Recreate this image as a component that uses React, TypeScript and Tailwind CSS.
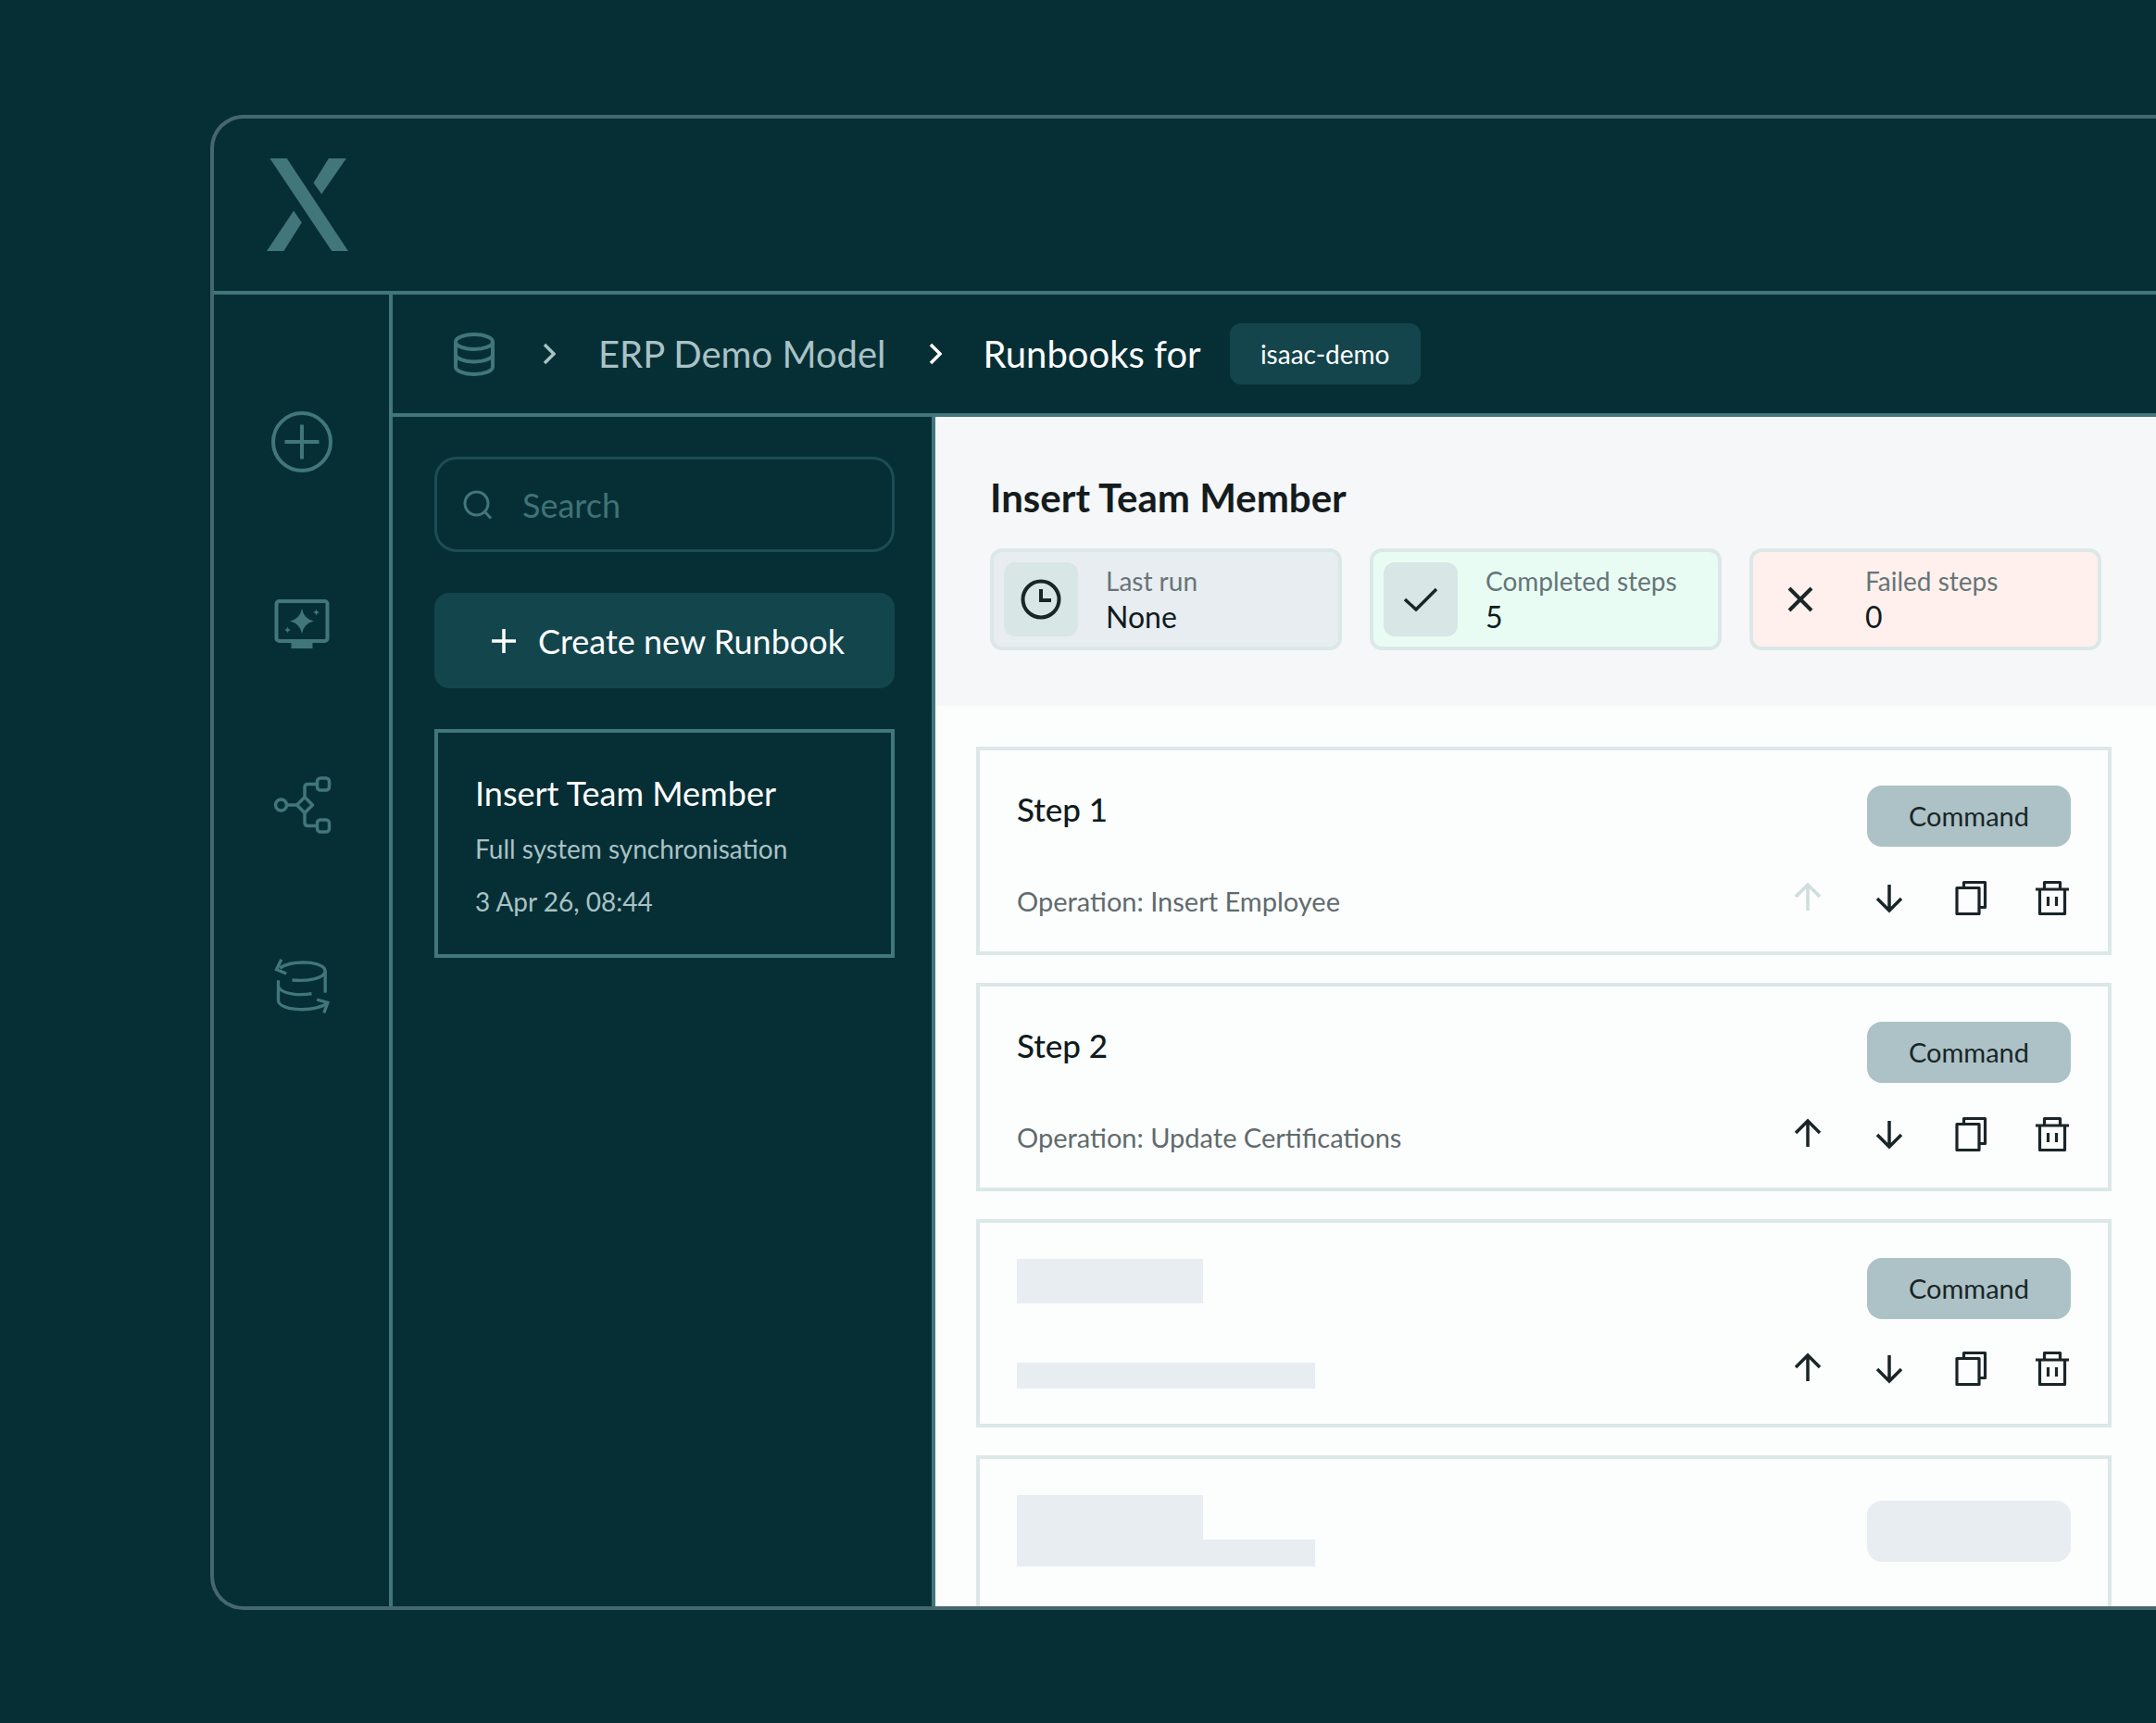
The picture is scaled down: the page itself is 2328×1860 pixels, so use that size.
import type { ReactNode } from "react";

const line = "#41767a";
const ink = "#1a2527";

const XLogo = () => (
  <svg width="88" height="100" viewBox="205 183 263 299" fill={line}>
    <polygon points="215,183 270,183 468,482 415,482" />
    <polygon points="405,183 462,183 382,298 356,262" />
    <polygon points="292,352 318,390 260,482 205,482" />
  </svg>
);

const PlusCircle = () => (
  <svg width="66" height="66" viewBox="0 0 66 66" fill="none" stroke={line} strokeWidth="4">
    <circle cx="33" cy="33" r="31" />
    <path d="M33 14.5v37M14.5 33h37" />
  </svg>
);

const MonitorSpark = () => (
  <svg width="66" height="66" viewBox="0 0 66 66" fill="none">
    <rect x="5.5" y="9" width="55" height="43" rx="3" stroke={line} strokeWidth="4" />
    <rect x="21.5" y="53" width="23" height="7" fill={line} />
    <path d="M33 17 Q35 28 46 30.5 Q35 33 33 44 Q31 33 20 30.5 Q31 28 33 17Z" fill={line} />
    <path d="M48.5 17.5 Q49 20.5 52 21 Q49 21.5 48.5 24.5 Q48 21.5 45 21 Q48 20.5 48.5 17.5Z" fill={line} />
    <path d="M17.5 36.5 Q18 39.5 21 40 Q18 40.5 17.5 43.5 Q17 40.5 14 40 Q17 39.5 17.5 36.5Z" fill={line} />
  </svg>
);

const FlowIcon = () => (
  <svg width="66" height="66" viewBox="0 0 66 66" fill="none" stroke={line} strokeWidth="3.5" strokeLinejoin="round">
    <circle cx="10.5" cy="33" r="6" />
    <path d="M16.5 33h11" />
    <path d="M36 24.5l8.5 8.5-8.5 8.5-8.5-8.5z" />
    <path d="M36 24.5V14q0-3.5 3.5-3.5H49.500" />
    <path d="M36 41.500V52q0 3.500 3.500 3.500H49.500" />
    <rect x="49.500" y="4" width="13" height="13" rx="3.500" />
    <rect x="49.500" y="49" width="13" height="13" rx="3.500" />
  </svg>
);

const DbSync = () => (
  <svg width="66" height="66" viewBox="217.500 1296 198 198" fill="none" stroke={line} strokeWidth="10">
    <path d="M245 1335C285 1308 392 1312 392 1345C392 1370 330 1378 285 1374" />
    <path d="M392 1345V1415" />
    <path d="M240 1375V1440C240 1470 340 1482 400 1450" />
    <path d="M240 1395C250 1420 310 1425 348 1418" />
    <path d="M250 1307L234 1340L266 1353" />
    <path d="M365 1437L400 1447L388 1480" />
  </svg>
);

const DbIcon = () => (
  <svg width="44" height="47" viewBox="0 0 44 47" fill="none" stroke={line} strokeWidth="4">
    <ellipse cx="22" cy="10" rx="20" ry="8" />
    <path d="M2 10v27c0 4.400 9 8 20 8s20-3.600 20-8V10" />
    <path d="M2 23.500c0 4.400 9 8 20 8s20-3.600 20-8" />
  </svg>
);

const Chevron = ({ color }: { color: string }) => (
  <svg width="14" height="24" viewBox="0 0 14 24" fill="none" stroke={color} strokeWidth="3.500">
    <path d="M2 2l10 10L2 22" />
  </svg>
);

const SearchIcon = () => (
  <svg width="32" height="32" viewBox="0 0 32 32" fill="none" stroke={line} strokeWidth="3">
    <circle cx="14.500" cy="14.500" r="12.500" />
    <path d="M23.500 23.500l6.500 7" />
  </svg>
);

const Clock = () => (
  <svg width="44" height="44" viewBox="0 0 44 44" fill="none" stroke={ink} strokeWidth="4">
    <circle cx="22" cy="22" r="19.500" />
    <path d="M22 11v12h11" />
  </svg>
);

const Check = () => (
  <svg width="36" height="26" viewBox="0 0 36 26" fill="none" stroke={ink} strokeWidth="3.500">
    <path d="M1 13l12 11L35 2" />
  </svg>
);

const Cross = () => (
  <svg width="28" height="28" viewBox="0 0 28 28" fill="none" stroke={ink} strokeWidth="4">
    <path d="M2 2l24 24M26 2L2 26" />
  </svg>
);

const ArrowUp = ({ color = ink }: { color?: string }) => (
  <svg width="40" height="40" viewBox="0 0 40 40" fill="none" stroke={color} strokeWidth="3.500">
    <path d="M20 6v28M7 19L20 6l13 13" />
  </svg>
);

const ArrowDown = () => (
  <svg width="40" height="40" viewBox="0 0 40 40" fill="none" stroke={ink} strokeWidth="3.500">
    <path d="M20 6v28M7 21l13 13 13-13" />
  </svg>
);

const CopyIcon = () => (
  <svg width="40" height="40" viewBox="0 0 40 40" fill="none" stroke={ink} strokeWidth="3.200" strokeLinejoin="round">
    <rect x="5" y="9.500" width="24" height="28" />
    <path d="M12.500 9V3.500H35.500V30.500H29" />
  </svg>
);

const TrashIcon = () => (
  <svg width="40" height="40" viewBox="0 0 40 40" fill="none" stroke={ink} strokeWidth="3.200" strokeLinejoin="round">
    <path d="M2 11h36" />
    <path d="M11.500 11V3.500h17V11" />
    <path d="M6.500 11v26.500h27V11" />
    <path d="M15.500 19v10M24.500 19v10" />
  </svg>
);

type StatProps = {
  icon: ReactNode;
  label: string;
  value: string;
  bg: string;
  box: string;
};

const Stat = ({ icon, label, value, bg, box }: StatProps) => (
  <div className={`flex h-[110px] w-[380px] items-center gap-[30px] rounded-[13px] border-4 border-[#dce8e8] pl-[11px] ${bg}`}>
    <div className={`flex h-[80px] w-[80px] items-center justify-center rounded-[12px] ${box}`}>{icon}</div>
    <div className="flex flex-col">
      <span className="text-[28px] leading-[38px] text-[#667577]">{label}</span>
      <span className="text-[32px] leading-[40px] text-[#0f1b1d]">{value}</span>
    </div>
  </div>
);

const StepActions = ({ firstDisabled }: { firstDisabled?: boolean }) => (
  <div className="flex gap-[48px]">
    <ArrowUp color={firstDisabled ? "#cfdddd" : ink} />
    <ArrowDown />
    <CopyIcon />
    <TrashIcon />
  </div>
);

const CommandButton = () => (
  <div className="flex h-[66px] w-[220px] items-center justify-center rounded-[16px] bg-[#acc2c6] text-[29px] text-[#1a2527]">
    Command
  </div>
);

type StepCardProps = {
  title?: string;
  operation?: string;
  firstDisabled?: boolean;
};

const StepCard = ({ title, operation, firstDisabled }: StepCardProps) => (
  <div className="flex h-[225px] shrink-0 flex-col border-4 border-[#dce8e8] px-[40px] pt-[38px]">
    <div className="flex items-start justify-between">
      {title ? (
        <span className="text-[35px] leading-[50px] font-medium text-[#0f1b1d]">{title}</span>
      ) : (
        <div className="mt-[1px] h-[48px] w-[201px] bg-[#e8edf1]" />
      )}
      <CommandButton />
    </div>
    <div className="mt-[31px] flex items-center justify-between">
      {operation ? (
        <span className="pt-2 text-[29px] leading-[40px] text-[#5f6b6d]">{operation}</span>
      ) : (
        <div className="mt-[16px] h-[28px] w-[322px] bg-[#e8edf1]" />
      )}
      <StepActions firstDisabled={firstDisabled} />
    </div>
  </div>
);

const SkeletonCard = () => (
  <div className="flex h-[225px] shrink-0 items-start justify-between border-4 border-[#dce8e8] px-[40px] pt-[39px]">
    <div className="flex flex-col">
      <div className="h-[48px] w-[201px] bg-[#e8edf1]" />
      <div className="h-[29px] w-[322px] bg-[#e8edf1]" />
    </div>
    <div className="mt-[6px] h-[66px] w-[220px] rounded-[16px] bg-[#e8edf1]" />
  </div>
);

export default function App() {
  return (
    <div className="h-[1860px] w-[2328px] overflow-hidden bg-[#062f35] pt-[124px] pl-[227px] [font-family:Lato,sans-serif]">
      <div className="flex h-[1614px] flex-col overflow-hidden rounded-l-[36px] border-y-4 border-l-4 border-[#46676d]">
        <header className="flex h-[190px] shrink-0 items-center border-b-4 border-[#41767a] pl-[57px]">
          <XLogo />
        </header>
        <div className="flex min-h-0 flex-1">
          <nav className="flex w-[193px] shrink-0 flex-col items-center gap-[130px] border-r-4 border-[#41767a] pt-[126px]">
            <PlusCircle />
            <MonitorSpark />
            <FlowIcon />
            <DbSync />
          </nav>
          <div className="flex min-w-0 flex-1 flex-col">
            <div className="flex h-[132px] shrink-0 items-center border-b-4 border-[#41767a] pl-[66px]">
              <DbIcon />
              <span className="ml-[52px]"><Chevron color="#a9c2c5" /></span>
              <span className="ml-[46px] text-[40px] text-[#a9c2c5]">ERP Demo Model</span>
              <span className="ml-[46px]"><Chevron color="#ffffff" /></span>
              <span className="ml-[45px] text-[40px] text-white">Runbooks for</span>
              <span className="ml-[31px] flex h-[66px] w-[206px] items-center justify-center rounded-[12px] bg-[#14454d] text-[28px] text-white">
                isaac-demo
              </span>
            </div>
            <div className="flex min-h-0 flex-1">
              <aside className="flex w-[586px] shrink-0 flex-col border-r-4 border-[#41767a] pt-[43px] pr-[40px] pl-[45px]">
                <div className="flex h-[103px] items-center gap-[32px] rounded-[24px] border-[3px] border-[#1d4d54] pl-[28px]">
                  <SearchIcon />
                  <span className="text-[36px] text-[#3f7377]">Search</span>
                </div>
                <button className="mt-[44px] flex h-[103px] items-center gap-[24px] rounded-[16px] bg-[#13454d] pl-[62px] text-[36px] text-white">
                  <svg width="26" height="26" viewBox="0 0 26 26" fill="none" stroke="#ffffff" strokeWidth="3.500">
                    <path d="M13 0v26M0 13h26" />
                  </svg>
                  Create new Runbook
                </button>
                <div className="mt-[44px] flex h-[247px] flex-col border-4 border-[#41767a] pt-[40px] pl-[40px]">
                  <span className="text-[36px] leading-[50px] text-white">Insert Team Member</span>
                  <span className="mt-[13px] text-[28px] leading-[44px] text-[#a9c2c5]">Full system synchronisation</span>
                  <span className="mt-[13px] text-[28px] leading-[44px] text-[#a9c2c5]">3 Apr 26, 08:44</span>
                </div>
              </aside>
              <main className="flex min-w-0 flex-1 flex-col bg-[#fcfdfd]">
                <section className="h-[312px] shrink-0 bg-[#f6f7f9] pt-[60px] pl-[59px]">
                  <h1 className="text-[42px] leading-[54px] font-bold text-[#141c1e]">Insert Team Member</h1>
                  <div className="mt-[28px] flex gap-[30px]">
                    <Stat icon={<Clock />} label="Last run" value="None" bg="bg-[#e8edf1]" box="bg-[#d8e6e6]" />
                    <Stat icon={<Check />} label="Completed steps" value="5" bg="bg-[#e8fcf4]" box="bg-[#d8e6e6]" />
                    <Stat icon={<Cross />} label="Failed steps" value="0" bg="bg-[#fff0ed]" box="bg-[#fff0ed]" />
                  </div>
                </section>
                <section className="flex min-h-0 flex-1 flex-col gap-[30px] overflow-hidden pt-[44px] pr-[48px] pl-[44px]">
                  <StepCard title="Step 1" operation="Operation: Insert Employee" firstDisabled />
                  <StepCard title="Step 2" operation="Operation: Update Certifications" />
                  <StepCard />
                  <SkeletonCard />
                </section>
              </main>
            </div>
          </div>
        </div>
      </div>
    </div>
  );
}
